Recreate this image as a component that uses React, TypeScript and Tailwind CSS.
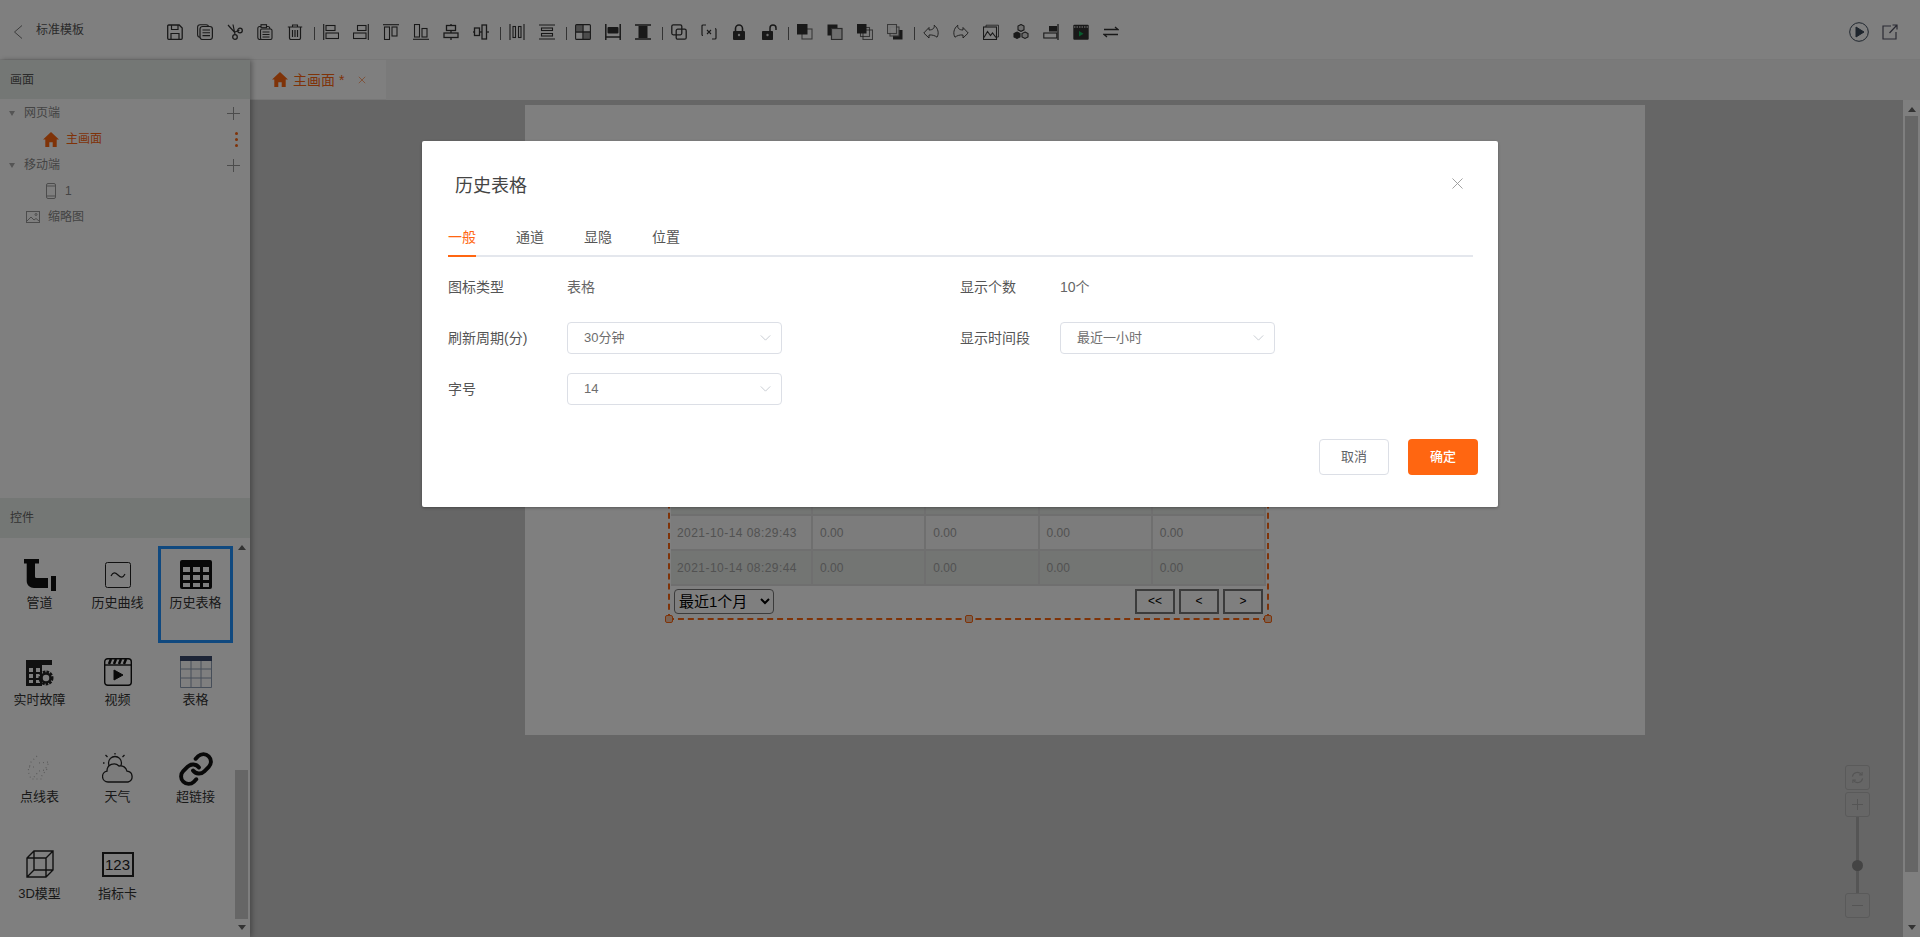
import { Link as LinkIcon } from 'lucide-react';
import type { ReactNode } from 'react';

// 16x16 toolbar glyph
function Ico({ children }: { children: ReactNode }) {
  return (
    <svg viewBox="0 0 16 16" className="w-4 h-4 shrink-0 text-[#333]" fill="none" stroke="currentColor" strokeWidth="1.1">
      {children}
    </svg>
  );
}

const Solid = 'currentColor';

const GROUPS: ReactNode[][] = [
  [
    <><path d="M.7 2a1 1 0 0 1 1-1h10.500l3 3v10.300a1 1 0 0 1-1 1H1.700a1 1 0 0 1-1-1z" strokeWidth="1.3" /><path d="M4.500 1v4.500h6.500V1M4 15V9.500h8V15" strokeWidth="1.2" /></>,
    <><rect x=".6" y=".8" width="11" height="12.500" rx="2.500" /><rect x="3" y="2.500" width="12.400" height="13" rx="2.500" fill="#f8f8f8" strokeWidth="1.2" /><path d="M5.500 6h7.500M5.500 8.800h7.500M5.500 11.600h7.500" /></>,
    <><path d="M1 1l6.500 7.200 5-2.200M6 .5l2 10" strokeWidth="1.2" /><circle cx="13" cy="6.500" r="2.300" strokeWidth="1.3" /><circle cx="8" cy="13" r="2.300" strokeWidth="1.3" /></>,
    <><rect x=".8" y="2.500" width="12" height="13" rx="2" /><rect x="4" y=".7" width="5.500" height="3" fill="#eee" /><rect x="3.500" y="5" width="11.500" height="10.500" rx="1.500" fill="#f8f8f8" /><path d="M5.500 8h7M5.500 10.500h7M5.500 13h7" /></>,
    <><path d="M.8 3h14.400M5.500 3V1h5v2" /><path d="M2.500 3v11a1.700 1.700 0 0 0 1.700 1.600h7.600a1.700 1.700 0 0 0 1.700-1.600V3M5.500 6v7M8 6v7M10.500 6v7" strokeWidth="1.2" /></>,
  ],
  [
    <><path d="M.7 0v16" /><rect x="3" y="1.500" width="9" height="5" /><rect x="3" y="9" width="12.500" height="5.500" /></>,
    <><path d="M15.300 0v16" /><rect x="4.500" y="1.500" width="8.500" height="5" /><rect x=".5" y="9" width="12.500" height="5.500" /></>,
    <><path d="M0 .7h16" /><rect x="1.500" y="3" width="5" height="12.500" /><rect x="9" y="3" width="5" height="9" /></>,
    <><path d="M0 15.300h16" /><rect x="1.500" y=".5" width="5" height="12.500" /><rect x="9" y="4.500" width="5" height="8.500" /></>,
    <><path d="M8 0v16" strokeWidth="1.3" /><rect x="3.500" y="1.500" width="9" height="5" fill="#f8f8f8" strokeWidth="1.3" /><rect x="1" y="9" width="14" height="4.500" fill="#f8f8f8" strokeWidth="1.3" /></>,
    <><path d="M0 8h16" strokeWidth="1.3" /><rect x="1.500" y="4" width="5" height="7.500" fill="#f8f8f8" strokeWidth="1.3" /><rect x="9" y="1" width="4.500" height="14" fill="#f8f8f8" strokeWidth="1.3" /></>,
  ],
  [
    <><path d="M1 0v16M15 0v16" /><rect x="4" y="2.500" width="2.500" height="11" /><rect x="9.500" y="2.500" width="2.500" height="11" /></>,
    <><path d="M0 1h16M0 15h16" /><rect x="2.500" y="4" width="11" height="2.500" /><rect x="2.500" y="9.500" width="11" height="2.500" /></>,
  ],
  [
    <><rect x=".6" y=".6" width="14.800" height="14.800" rx="1" /><rect x="1" y="1" width="6.500" height="6.500" fill={Solid} opacity=".5" stroke="none" /><rect x="8.500" y="8.500" width="6.500" height="6.500" fill={Solid} opacity=".5" stroke="none" /><path d="M8 1v14M1 8h14" strokeWidth="1.3" /></>,
    <><path d="M.8 0v16M15.200 0v16" strokeWidth="1.500" /><path d="M.8 13h14.400" strokeWidth="1.500" /><rect x="2.500" y="3" width="11" height="6.500" rx="1" fill={Solid} stroke="none" /></>,
    <><path d="M0 1h16M0 15h16" strokeWidth="1.700" /><rect x="3.500" y="2" width="9" height="12" fill={Solid} stroke="none" /></>,
  ],
  [
    <><rect x=".8" y=".8" width="10" height="10" rx="1.500" strokeWidth="1.300" /><rect x="5.200" y="5.200" width="10" height="10" rx="1.500" strokeWidth="1.300" /></>,
    <><path d="M5 1H2a1 1 0 0 0-1 1v8.500a1 1 0 0 0 1 1M11 15h3a1 1 0 0 0 1-1V5.500a1 1 0 0 0-1-1" strokeWidth="1.200" /><path d="M6 6l4 4M10 6l-4 4" /></>,
    <><path d="M4.500 7V4.500a3.500 3.500 0 0 1 7 0V7" strokeWidth="1.600" /><rect x="2" y="7" width="12" height="9" rx="1" fill={Solid} stroke="none" /><circle cx="8" cy="11" r="1.200" fill="#ddd" stroke="none" /></>,
    <><path d="M9 7V4a3 3 0 0 1 6 0v2" strokeWidth="1.500" /><rect x="1" y="7" width="11" height="9" rx=".8" fill={Solid} stroke="none" /><circle cx="6.500" cy="11" r="1.200" fill="#ddd" stroke="none" /></>,
  ],
  [
    <><rect x="5" y="5" width="10" height="10" strokeWidth="1.100" opacity=".7" /><rect x="0" y="0" width="10.500" height="10.500" fill={Solid} stroke="none" /></>,
    <><rect x=".5" y=".5" width="10" height="11" fill={Solid} stroke="none" /><rect x="4.500" y="4.500" width="10.500" height="11" fill="#dcdcdc" stroke="#555" strokeWidth="1.200" /></>,
    <><rect x="6" y="6" width="9.500" height="9.500" opacity=".7" /><rect x="3.500" y="3.500" width="9" height="9" opacity=".7" /><rect x="0" y="0" width="9.500" height="9.500" fill={Solid} stroke="none" /></>,
    <><rect x="6" y="6" width="9.500" height="9.500" fill={Solid} stroke="none" /><rect x="3" y="3" width="9" height="9" fill="#f8f8f8" opacity=".9" stroke="#666" /><rect x=".5" y=".5" width="9" height="9" fill="#f8f8f8" opacity=".9" stroke="#666" /></>,
  ],
  [
    <path d="M6 3.500L.8 9 6 14v-3c3-.3 6 .5 8 2.200 2.200-3.600 1.300-8.700-2.800-12 .6 3-1.500 4.800-5.200 4.800z" strokeWidth=".9" />,
    <path d="M10 3.500L15.200 9 10 14v-3c-3-.3-6 .5-8 2.200C-.2 9.600.7 4.500 4.800 1.200c-.6 3 1.500 4.800 5.200 4.800z" strokeWidth=".9" />,
    <><rect x=".5" y="3" width="13" height="12.500" /><path d="M3 3V1.200h12.500V13H13.500" strokeWidth=".8" /><path d="M1 13.500l3.500-6 3 4 2-2.500 3.500 4.500" /></>,
    <><path d="M8 .5l3 1.500v3.800L8 7.300 5 5.800V2z" fill="#ddd" /><path d="M4 8l3 1.500V13l-3 1.500L1 13V9.500z" fill={Solid} /><path d="M12 8l3 1.500V13l-3 1.500L9 13V9.500z" fill="#ddd" /></>,
    <><path d="M15 0v16" strokeWidth="1.300" /><rect x="6" y="2" width="8" height="5.500" fill={Solid} stroke="none" /><rect x=".8" y="9" width="13" height="5" /></>,
    <><rect x=".3" y=".8" width="15.400" height="15" rx="1" fill={Solid} stroke="none" /><path d="M1 3h14" stroke="#bbb" strokeDasharray="1.500 1" strokeWidth="1.400" /><path d="M6 7v5.500l4.500-2.800z" fill="#10b95c" stroke="none" /></>,
    <path d="M1 5.500h14l-3-2.500M15 10.500H1l3 2.500" strokeWidth="1.300" />,
  ],
];

function Toolbar() {
  return (
    <div className="flex items-center gap-[14px] mt-[4px]">
      {GROUPS.map((group, g) => (
        <div key={g} className="contents">
          {g > 0 && <span className="w-px h-[13px] bg-[#666] ml-[-3px] mr-[-6px] mt-[3px] shrink-0" />}
          {group.map((icon, i) => (
            <Ico key={i}>{icon}</Ico>
          ))}
        </div>
      ))}
    </div>
  );
}

function HomeIcon({ className }: { className: string }) {
  return (
    <svg viewBox="0 0 16 15" className={className} fill="currentColor">
      <path d="M8 0L0 7.500h2.300V15h4v-4.800h3.400V15h4V7.500H16z" />
    </svg>
  );
}

function Plus() {
  return (
    <svg viewBox="0 0 13 13" className="w-[13px] h-[13px] text-[#999]" fill="none" stroke="currentColor">
      <path d="M6.500 0v13M0 6.500h13" />
    </svg>
  );
}

function Caret() {
  return <span className="w-0 h-0 border-x-[3.5px] border-x-transparent border-t-[5px] border-t-[#aaa] ml-[9px] mr-[9px]" />;
}

function Tree() {
  return (
    <div className="pt-[1px] text-xs text-[#888]">
      <div className="h-[26px] flex items-center pr-[10px]">
        <Caret />
        <span className="flex-1">网页端</span>
        <Plus />
      </div>
      <div className="h-[26px] flex items-center text-[#ff6611] pl-[43px] pr-[11px]">
        <HomeIcon className="w-4 h-[15px]" />
        <span className="ml-[7px] flex-1">主画面</span>
        <span className="flex flex-col gap-[3px] mr-[1px]">
          <i className="w-[3px] h-[3px] rounded-full bg-[#ff6611]" />
          <i className="w-[3px] h-[3px] rounded-full bg-[#ff6611]" />
          <i className="w-[3px] h-[3px] rounded-full bg-[#ff6611]" />
        </span>
      </div>
      <div className="h-[26px] flex items-center pr-[10px]">
        <Caret />
        <span className="flex-1">移动端</span>
        <Plus />
      </div>
      <div className="h-[25px] flex items-center pl-[46px]">
        <svg viewBox="0 0 10 16" className="w-[10px] h-4 text-[#999]" fill="none" stroke="currentColor">
          <rect x=".5" y=".5" width="9" height="15" rx="1.500" />
          <path d="M.5 3h9M.5 13h9" />
        </svg>
        <span className="ml-[9px]">1</span>
      </div>
      <div className="h-[27px] flex items-center pl-[26px]">
        <svg viewBox="0 0 14 12" className="w-[14px] h-3 text-[#999]" fill="none" stroke="currentColor">
          <rect x=".5" y=".5" width="13" height="11" />
          <path d="M1 10l4-4 3 3 2-1.500 3 2.500" />
          <circle cx="10" cy="3.500" r="1" />
        </svg>
        <span className="ml-2">缩略图</span>
      </div>
    </div>
  );
}

const WIDGETS: { label: string; icon: ReactNode }[] = [
  {
    label: '管道',
    icon: (
      <svg viewBox="0 0 32 32" className="w-8 h-8 text-[#111]" fill="currentColor">
        <path d="M0 0h15v4.500h-4v13a1.500 1.500 0 0 0 1.500 1.500H24v10H10c-4 0-7.300-3-7.300-7V4.500H0z" />
        <path d="M27 17h5v15h-5z" />
      </svg>
    ),
  },
  {
    label: '历史曲线',
    icon: (
      <svg viewBox="0 0 26 26" className="w-[26px] h-[26px] mt-[3px] text-[#222]" fill="none" stroke="currentColor">
        <rect x=".5" y=".5" width="25" height="25" rx="2" />
        <path d="M6 14c2-4 4-4 7-1s5 3 7-1" strokeWidth="1.200" />
      </svg>
    ),
  },
  {
    label: '历史表格',
    icon: (
      <svg viewBox="0 0 32 29" className="w-8 h-[29px] mt-[1px] text-[#111]" fill="currentColor">
        <path fillRule="evenodd" d="M2 0h28a2 2 0 0 1 2 2v25a2 2 0 0 1-2 2H2a2 2 0 0 1-2-2V2a2 2 0 0 1 2-2zM3 7v5h7V7zm10 0v5h7V7zm10 0v5h6V7zM3 15v5h7v-5zm10 0v5h7v-5zm10 0v5h6v-5zM3 23v4h7v-4zm10 0v4h7v-4zm10 0v4h6v-4z" />
      </svg>
    ),
  },
  {
    label: '实时故障',
    icon: (
      <svg viewBox="0 0 28 26" className="w-7 h-[26px] mt-[4px] text-[#222]">
        <path fill="currentColor" fillRule="evenodd" d="M0 0h26v5H0zM0 5h16v22H0zM3 8v4h4V8zm7 0v4h4V8zM3 14v4h4v-4zm7 0v4h4v-4zM3 20v3h4v-3zm7 0v3h4v-3z" />
        <circle cx="20" cy="18" r="6" fill="none" stroke="currentColor" strokeWidth="3" strokeDasharray="2.500 1" />
        <circle cx="20" cy="18" r="4.500" fill="none" stroke="currentColor" strokeWidth="2.500" />
      </svg>
    ),
  },
  {
    label: '视频',
    icon: (
      <svg viewBox="0 0 28 28" className="w-7 h-7 mt-[2px] text-[#111]" fill="none" stroke="currentColor">
        <rect x=".7" y=".7" width="26.600" height="26.600" rx="3" strokeWidth="1.400" />
        <path d="M1 7h26" strokeWidth="1.400" />
        <path d="M5 6l2-5M10 6l2-5M15 6l2-5M20 6l2-5" strokeWidth="2.500" />
        <path d="M10 12v10l9-5z" fill="currentColor" />
      </svg>
    ),
  },
  {
    label: '表格',
    icon: (
      <svg viewBox="0 0 32 32" className="w-8 h-8" fill="none">
        <rect x="0" y="0" width="32" height="5" fill="#3a4a6e" />
        <path d="M.5 5v26.500h31V5M.5 13h31M.5 22h31M11 5v27M21 5v27" stroke="#8d9cb2" />
      </svg>
    ),
  },
  {
    label: '点线表',
    icon: (
      <svg viewBox="0 0 30 30" className="w-[30px] h-[30px] text-[#b8b8b8]" fill="none" stroke="currentColor" strokeDasharray="1 3" strokeWidth="1.200">
        <path d="M12 3l-6 6-3 9 3 8h12M14 10l10-1-4 8-6 1-5 6M4 14h8M22 16l-6 8" />
      </svg>
    ),
  },
  {
    label: '天气',
    icon: (
      <svg viewBox="0 0 32 30" className="w-8 h-[30px] text-[#222]" fill="none" stroke="currentColor" strokeWidth="1.300">
        <circle cx="13" cy="10" r="6.500" />
        <path d="M13 0v1.500M3.500 2l2 2M22.500 2l-2 2M1 10h1.500" />
        <path d="M6 29a5.500 5.500 0 0 1-1-10.900A7 7 0 0 1 17 13a6.500 6.500 0 0 1 8 5.200A5.500 5.500 0 0 1 26 29z" fill="#f8f8f8" />
      </svg>
    ),
  },
  {
    label: '超链接',
    icon: <LinkIcon className="w-9 h-9 -mt-[2px] text-[#111]" strokeWidth={2.6} />,
  },
  {
    label: '3D模型',
    icon: (
      <svg viewBox="0 0 28 28" className="w-7 h-7 text-[#222]" fill="none" stroke="currentColor" strokeWidth="1.400">
        <path d="M1 8L8 1h19v19l-7 7H1zM1 8h19v19M20 8l7-7M8 1v19h19M1 27l7-7" />
      </svg>
    ),
  },
  {
    label: '指标卡',
    icon: (
      <div className="w-8 h-[25px] mt-[2px] border-2 border-[#222] flex items-center justify-center text-[15px] leading-none text-[#222]">
        123
      </div>
    ),
  },
];

function Scrollbar({ thumb }: { thumb: ReactNode }) {
  return (
    <div className="w-[17px] h-full shrink-0 flex flex-col items-center pb-[7px]">
      <span className="w-0 h-0 mt-[7px] border-x-[4px] border-x-transparent border-b-[5px] border-b-[#666]" />
      {thumb}
      <span className="w-0 h-0 mt-[6px] border-x-[4px] border-x-transparent border-t-[5px] border-t-[#666]" />
    </div>
  );
}

function Sidebar() {
  return (
    <aside className="w-[250px] shrink-0 bg-white flex flex-col shadow-[2px_0_5px_rgba(0,0,0,0.3)] z-10">
      <div className="h-[39px] shrink-0 bg-[#e9efea] flex items-center pl-[10px] text-xs text-[#555]">画面</div>
      <div className="flex-1">
        <Tree />
      </div>
      <div className="h-10 shrink-0 bg-[#e9efea] flex items-center pl-[10px] text-xs text-[#666]">控件</div>
      <div className="h-[399px] shrink-0 flex">
        <div className="flex-1 min-w-0 pl-[2px] pt-2 grid grid-cols-[78px_78px_78px] auto-rows-[97px]">
          {WIDGETS.map((w) => (
            <div
              key={w.label}
              className={`w-[75px] h-[97px] flex flex-col items-center pt-[13px] ${w.label === '历史表格' ? 'outline-[3px] -outline-offset-[3px] outline-[#2193ff]' : ''}`}
            >
              <div className="h-8 flex items-start justify-center">{w.icon}</div>
              <span className="mt-[4px] text-[13px] leading-4 text-[#333] whitespace-nowrap">{w.label}</span>
            </div>
          ))}
        </div>
        <Scrollbar thumb={<span className="w-[13px] h-[149px] mt-auto bg-[#cdcdcd]" />} />
      </div>
    </aside>
  );
}

const ROWS = [
  { time: '2021-10-14 08:29:42', alt: true },
  { time: '2021-10-14 08:29:43', alt: false },
  { time: '2021-10-14 08:29:44', alt: true },
];

function HistoryTable() {
  return (
    <div className="absolute left-[143px] top-[195px] w-[601px] h-[320px] border-2 border-dashed border-[#ff6611] px-[1px] flex flex-col justify-end">
      {ROWS.map((r) => (
        <div key={r.time} className={`h-[35px] flex border-b-2 border-[#dedede] text-xs text-[#a4a4a4] ${r.alt ? 'bg-[#e6ebe7]' : 'bg-[#f8f8f8]'}`}>
          <div className="w-[143px] flex items-center pl-[6px] border-r-2 border-[#dedede] tracking-[0.45px]">{r.time}</div>
          {[0, 1, 2, 3].map((c) => (
            <div key={c} className="w-[114px] flex items-center pl-[7px] border-r-2 border-[#dedede]">0.00</div>
          ))}
        </div>
      ))}
      <div className="h-[32px] shrink-0 flex items-center justify-between pl-[3px] pr-[3px] pb-[2px]">
        <select defaultValue="1" className="w-[100px] h-[25px] border border-[#767676] rounded-[4px] text-[15px] text-black appearance-auto">
          <option value="1">最近1个月</option>
        </select>
        <div className="flex gap-[4px] text-xs text-black">
          <button className="w-10 h-[25px] border-2 border-[#767676]">&lt;&lt;</button>
          <button className="w-10 h-[25px] border-2 border-[#767676]">&lt;</button>
          <button className="w-10 h-[25px] border-2 border-[#767676]">&gt;</button>
        </div>
      </div>
      <span className="absolute left-[-5px] bottom-[-5px] w-2 h-2 rounded-[2px] border border-[#ff6611] bg-[#f4c9ad]" />
      <span className="absolute left-[295px] bottom-[-5px] w-2 h-2 rounded-[2px] border border-[#ff6611] bg-[#f4c9ad]" />
      <span className="absolute right-[-5px] bottom-[-5px] w-2 h-2 rounded-[2px] border border-[#ff6611] bg-[#f4c9ad]" />
    </div>
  );
}

function ZoomControls() {
  return (
    <div className="absolute left-[1595px] top-[665px] w-[25px] flex flex-col items-center text-[#aaa]">
      <div className="w-[25px] h-[25px] border border-[#b4b4b4] rounded-[3px] flex items-center justify-center">
        <svg viewBox="0 0 14 14" className="w-[13px] h-[13px]" fill="none" stroke="currentColor" strokeWidth="1.200">
          <path d="M1.500 6a5.500 5.500 0 0 1 10-2M12.500 8a5.500 5.500 0 0 1-10 2" />
          <path d="M12 1v3.200H8.800M2 13V9.800h3.200" />
        </svg>
      </div>
      <div className="w-[25px] h-[25px] mt-[2px] border border-[#b4b4b4] rounded-[3px] flex items-center justify-center">
        <svg viewBox="0 0 13 13" className="w-[13px] h-[13px]" fill="none" stroke="currentColor"><path d="M6.500 1v11M1 6.500h11" /></svg>
      </div>
      <div className="w-[3px] h-[76px] bg-[#aaa] relative">
        <span className="absolute left-[-4px] top-[43px] w-[11px] h-[11px] rounded-full bg-[#888]" />
      </div>
      <div className="w-[25px] h-[25px] border border-[#b4b4b4] rounded-[3px] flex items-center justify-center">
        <svg viewBox="0 0 13 13" className="w-[13px] h-[13px]" fill="none" stroke="currentColor"><path d="M1 6.500h11" /></svg>
      </div>
    </div>
  );
}

function SelectBox({ value, width }: { value: string; width: string }) {
  return (
    <div className={`h-8 ${width} border border-[#dcdfe6] rounded-[4px] flex items-center justify-between pl-4 pr-[10px] text-[13px] text-[#6e6e6e]`}>
      <span>{value}</span>
      <svg viewBox="0 0 12 7" className="w-[11px] h-[6px] text-[#c0c4cc]" fill="none" stroke="currentColor">
        <path d="M.5.5L6 6 11.500.5" />
      </svg>
    </div>
  );
}

function Dialog() {
  return (
    <div className="relative w-[1076px] h-[366px] bg-white rounded-[2px] shadow-[0_1px_3px_rgba(0,0,0,0.3)] pl-[26px] pr-[25px] text-[#333]">
      <svg viewBox="0 0 12 12" className="absolute right-[35px] top-[37px] w-[11px] h-[11px] text-[#999]" fill="none" stroke="currentColor">
        <path d="M.5.5l11 11M11.500.5l-11 11" />
      </svg>
      <h2 className="pt-[33px] pl-[7px] text-lg leading-6 font-normal text-[#444]">历史表格</h2>
      <div className="mt-[29px] flex gap-10 border-b-2 border-[#e4e7ed] text-sm leading-5 text-[#555]">
        <span className="pb-2 -mb-[2px] border-b-2 border-[#ff6611] text-[#ff6611]">一般</span>
        <span className="pb-2">通道</span>
        <span className="pb-2">显隐</span>
        <span className="pb-2">位置</span>
      </div>
      <div className="mt-[14px] grid grid-cols-[512px_1fr] auto-rows-[32px] gap-y-[19px] text-sm text-[#555]">
        <div className="flex items-center">
          <span className="w-[119px]">图标类型</span>
          <span className="text-[#666]">表格</span>
        </div>
        <div className="flex items-center">
          <span className="w-[100px]">显示个数</span>
          <span className="text-[#666]">10个</span>
        </div>
        <div className="flex items-center">
          <span className="w-[119px]">刷新周期(分)</span>
          <SelectBox value="30分钟" width="w-[215px]" />
        </div>
        <div className="flex items-center">
          <span className="w-[100px]">显示时间段</span>
          <SelectBox value="最近一小时" width="w-[215px]" />
        </div>
        <div className="flex items-center">
          <span className="w-[119px]">字号</span>
          <SelectBox value="14" width="w-[215px]" />
        </div>
      </div>
      <div className="mt-[34px] -mr-[5px] flex justify-end gap-[19px] text-[13px]">
        <button className="w-[70px] h-9 rounded-[4px] border border-[#dcdfe6] bg-white text-[#606266]">取消</button>
        <button className="w-[70px] h-9 rounded-[4px] bg-[#ff6611] text-white font-medium">确定</button>
      </div>
    </div>
  );
}

export default function App() {
  return (
    <div className="relative w-full h-[937px] overflow-hidden flex flex-col bg-white font-['Liberation_Sans','Noto_Sans_CJK_SC',sans-serif]">
      <header className="h-[60px] shrink-0 flex items-center border-b border-[#f0f0f0] bg-white">
        <svg viewBox="0 0 10 14" className="w-[10px] h-[14px] ml-[13px] text-[#777] mt-[4px]" fill="none" stroke="currentColor">
          <path d="M9 .5L1.500 7 9 13.500" />
        </svg>
        <span className="ml-[13px] w-[131px] text-xs text-[#555]">标准模板</span>
        <Toolbar />
        <div className="ml-auto mr-[22px] mt-[4px] flex items-center gap-[13px]">
          <svg viewBox="0 0 20 20" className="w-5 h-5 text-[#3c4a5a]" fill="none" stroke="currentColor">
            <circle cx="10" cy="10" r="9.300" />
            <path d="M7 5v10l8-5z" fill="currentColor" />
          </svg>
          <svg viewBox="0 0 16 16" className="w-4 h-4 text-[#556]" fill="none" stroke="currentColor" strokeWidth="1.200">
            <path d="M9 2H1v13h13V8M7.500 9L15 1M10.500 1H15v4.500" />
          </svg>
        </div>
      </header>

      <div className="flex-1 flex min-h-0">
        <Sidebar />
        <main className="flex-1 flex flex-col min-w-0">
          <div className="h-10 shrink-0 bg-[#f4f4f4] flex">
            <div className="w-[136px] bg-white border-b border-[#eee] flex items-center pl-[22px] text-[#ff6611]">
              <HomeIcon className="w-4 h-[15px]" />
              <span className="ml-[5px] text-sm">主画面 *</span>
              <svg viewBox="0 0 10 10" className="ml-[14px] w-2 h-2 opacity-70" fill="none" stroke="currentColor">
                <path d="M1 1l8 8M9 1l-8 8" />
              </svg>
            </div>
          </div>
          <div className="flex-1 flex bg-[#cccccc] min-h-0">
            <div className="flex-1 relative">
              <div className="relative ml-[275px] mt-[5px] w-[1120px] h-[630px] bg-white">
                <HistoryTable />
              </div>
              <ZoomControls />
            </div>
            <div className="bg-white">
              <Scrollbar thumb={<span className="w-[13px] h-[756px] mt-[4px] mb-auto bg-[#cdcdcd]" />} />
            </div>
          </div>
        </main>
      </div>

      <div className="absolute inset-0 z-20 bg-black/50 flex justify-center pt-[141px]">
        <div>
          <Dialog />
        </div>
      </div>
    </div>
  );
}
